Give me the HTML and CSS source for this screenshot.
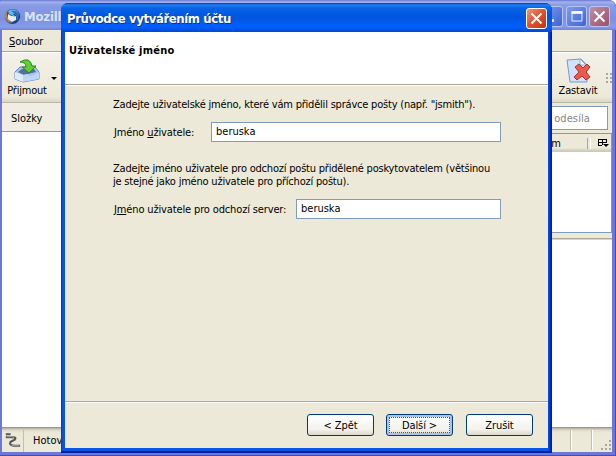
FILE: index.html
```html
<!DOCTYPE html>
<html lang="cs">
<head>
<meta charset="utf-8">
<title>Průvodce vytvářením účtu</title>
<link rel="stylesheet" href="styles.css">
</head>
<body>
<main class="desktop">
  <section class="app">
    <header class="app-title">
      <svg class="app-icon" viewBox="0 0 17 17"><circle cx="8.5" cy="8.5" r="7.6" fill="#174686"/><path d="M1 4L4 2 3 6 4 10 8 15 4 14 1 10Z" fill="#c67c3d"/><path d="M4 6Q8 9 12 8L12 12 8 14 4 11Z" fill="#e9edf0"/><path d="M4 3Q9-1 14 4L15 8Q12 5 9 6L12 9 5 6Z" fill="#68b9e8"/><path d="M7 3Q13 2 15 7L14 12 12 12Q14 7 7 3Z" fill="#2a70b5"/></svg>
      <span class="app-name">Mozilla</span>
      <div class="caption-buttons">
        <span class="caption caption-min"><svg viewBox="0 0 21 21"><path d="M5 15h7" stroke="#fff" stroke-width="3"/></svg></span>
        <span class="caption"><svg viewBox="0 0 21 21"><path d="M5.5 5v10.5h11V5" fill="none" stroke="#fff"/><path d="M5 6h12" stroke="#fff" stroke-width="3"/></svg></span>
        <span class="caption caption-close"><svg viewBox="0 0 21 21"><path d="M5 5l11 11M16 5l-11 11" stroke="#fff" stroke-width="2.2"/></svg></span>
      </div>
    </header>
    <nav class="menu"><span><u>S</u>oubor</span><span>Ú</span></nav>
    <div class="toolbar">
      <div class="tool">
        <svg class="tool-icon" viewBox="0 0 26 26"><path d="M1 14l5-5h15l4 5v7L9 24 1 21Z" fill="#a9c5ee" stroke="#6687bd"/><path d="M4 14l4-3h12l2 3-12 3Z" fill="#526f9c"/><path d="M1 14l8 3v7l-8-3Z" fill="#dcebff"/><path d="M9 17l4-1 3 2 4-1 5-3v7L9 24Z" fill="#bfd5f6"/><path d="M6 4Q16-2 18 8h4l-7 7-7-6h4Q12 4 6 4Z" fill="#62cd32" stroke="#278b20"/></svg>
        <span>Přijmout</span>
      </div>
      <i class="arrow"></i>
      <div class="tool tool-stop">
        <svg class="tool-icon" viewBox="0 0 26 26"><path d="M2 2l14-1 5 5 1 18H5Z" fill="#cfe2fb" stroke="#7399d3"/><path d="M15 1v6h6Z" fill="#fff" stroke="#8eaedb"/><path d="M10 9l4-3 4 4 4-4 3 3-4 5 4 5-4 3-4-4-5 4-3-3 5-5Z" fill="#ea5b4e" stroke="#b52d2a"/></svg>
        <span>Zastavit</span>
      </div>
      <i class="grip"></i>
    </div>
    <div class="workspace">
      <aside class="folders"><div class="folder-head">Složky</div><div class="tree"></div></aside>
      <div class="mail">
        <div class="search-row"><div class="search">o odesíla</div></div>
        <div class="messages">
          <div class="columns"><span class="column-name">m</span><svg class="picker" viewBox="0 0 12 10"><path d="M1.5 1v7M1 1.5h9M5.5 1v6M9.5 1v4M1 4.5h9M1 7.5h4" fill="none" stroke="#000"/><path d="M6 6h6L9 9Z"/></svg></div>
        </div>
        <div class="splitter"></div>
        <div class="preview"></div>
      </div>
    </div>
    <footer class="status">
      <svg class="online" viewBox="0 0 22 24"><path d="M4 6h5M4 9h6q6 0 3 3l-4 2q-2 3 3 4h7" fill="none" stroke="#555" stroke-width="2.2"/><path d="M5 8.5h5q4 0 1 3M10 17.5h8" fill="none" stroke="#aaa"/></svg>
      <span class="status-text">Hotovo</span><i class="panel"></i><i class="panel"></i><i class="panel"></i>
      <svg class="resize" viewBox="0 0 12 12"><path d="M9 1h2v2H9zM5 5h2v2H5zM9 5h2v2H9zM1 9h2v2H1zM5 9h2v2H5zM9 9h2v2H9z" fill="#aaa797"/></svg>
    </footer>
  </section>

  <section class="dialog" role="dialog">
    <header class="dialog-title"><h1>Průvodce vytvářením účtu</h1><button class="dialog-close" aria-label="Zavřít"><svg viewBox="0 0 21 21"><path d="M5 5l11 11M16 5l-11 11" stroke="#fff" stroke-width="2.2"/></svg></button></header>
    <div class="dialog-body">
      <div class="page-head"><h2>Uživatelské jméno</h2></div>
      <form class="page">
        <p class="intro">Zadejte uživatelské jméno, které vám přidělil správce pošty (např. "jsmith").</p>
        <div class="field"><label for="user">Jméno <u>u</u>živatele:</label><input id="user" value="beruska"></div>
        <p class="outgoing">Zadejte jméno uživatele pro odchozí poštu přidělené poskytovatelem (většinou<br>je stejné jako jméno uživatele pro příchozí poštu).</p>
        <div class="field field-out"><label for="smtp">J<u>m</u>éno uživatele pro odchozí server:</label><input id="smtp" value="beruska"></div>
      </form>
      <footer class="actions"><button>&lt; Zpět</button><button class="primary">Další &gt;</button><button class="cancel">Zrušit</button></footer>
    </div>
  </section>
</main>
</body>
</html>
```
FILE: styles.css
```css
* { box-sizing: border-box; }
body, h1, h2, p { margin: 0; }
body, input, button { font: 11px/13px "DejaVu Sans Condensed", "DejaVu Sans", sans-serif; color: #000; }
body { overflow: hidden; background: #fff; }
svg { display: block; }
u { text-underline-offset: 1px; text-decoration-thickness: 1px; text-decoration-skip-ink: none; }
.desktop { position: relative; width: 616px; height: 456px; }
.app { display: flex; flex-direction: column; width: 616px; height: 456px; padding: 0 4px 4px 2px; background: #6c78d8; border-radius: 0 7px 0 0; box-shadow: inset -1px -1px #4c4ca8; }
.app-title { display: flex; align-items: center; flex: 0 0 30px; margin: 0 -4px 0 -2px; padding: 3px 6px 0 4px; border-radius: 3px 8px 0 0; background: linear-gradient(#6876ce 0, #a1b2ee 2px, #899be5 5px, #7b91e0 18px, #859ce8 27px, #7182d6 30px); }
.app-icon { width: 17px; height: 17px; }
.app-name { margin-left: 3px; color: #d9e2f9; font-size: 13px; font-weight: bold; letter-spacing: -.2px; }
.caption-buttons { display: flex; gap: 2px; margin-left: auto; }
.caption { width: 21px; height: 21px; border: 1px solid #b8c5f4; border-radius: 3px; background: linear-gradient(135deg, #7f9aea, #3c64d5); }
.caption-min { margin-right: 1px; }
.caption svg, .dialog-close svg { width: 19px; height: 19px; }
.caption-close { background: linear-gradient(135deg, #bf8fa7, #9f4e68); }
.menu { display: flex; gap: 17px; flex: 0 0 22px; padding: 5px 7px 3px; background: #ece9d8; border-bottom: 1px solid #aaa797; letter-spacing: -.15px; }
.toolbar { display: flex; flex: 0 0 51px; padding-left: 4px; border-bottom: 1px solid #bab7a6; border-top: 1px solid #fff; background: linear-gradient(#f3f1e8, #ece9d8 44px, #dad6c6); letter-spacing: -.2px; }
.tool { display: flex; flex-direction: column; align-items: center; width: 42px; padding-top: 5px; white-space: nowrap; }
.tool-icon { width: 26px; height: 26px; }
.arrow { width: 0; height: 0; margin: 24px 0 0 3px; border: 3px solid transparent; border-top-color: #000; }
.tool-stop { margin-left: auto; margin-right: 6px; }
.grip { width: 7px; height: 12px; margin-top: 19px; background: radial-gradient(#aaa797 1px, transparent 1px) 0 0 / 4px 4px; }
.workspace { display: flex; flex: 1; min-height: 0; }
.folders { display: flex; flex-direction: column; width: 80px; }
.folder-head { flex: 0 0 29px; padding: 9px 9px 5px; background: #f0eee3; border-bottom: 1px solid #7f9db9; }
.tree { flex: 1; background: #fff; }
.mail { display: flex; flex-direction: column; flex: 1; background: #ece9d8; }
.search-row { display: flex; justify-content: flex-end; flex: 0 0 30px; padding: 3px 4px 3px 0; }
.search { width: 150px; height: 24px; padding: 5px 17px 0 0; text-align: right; color: #858585; background: #fff; border: 1px solid #7f9db9; letter-spacing: .1px; }
.messages { flex: 0 0 100px; background: #fff; border: 1px solid #7f9db9; }
.columns { display: flex; align-items: center; justify-content: flex-end; position: relative; height: 18px; background: linear-gradient(#ece9d8 14px, #d6d2c2 16px, #cbc7b8); }
.columns::after { content: ""; position: absolute; right: 20px; width: 2px; height: 11px; border-left: 1px solid #aca899; border-right: 1px solid #fff; }
.column-name { margin-right: 36px; }
.picker { width: 12px; height: 10px; margin-right: 2px; }
.splitter { flex: 0 0 6px; border-bottom: 1px solid #aca899; }
.preview { flex: 1; background: #fff; border-top: 1px solid #d8d4c5; }
.status { display: flex; align-items: center; flex: 0 0 24px; background: linear-gradient(#bcb9a8 1px, #dfdccc 2px, #ece9d8 5px); border-top: 1px solid #7f9db9; }
.online { width: 22px; height: 24px; border-right: 1px solid #c2bfae; }
.status-text { margin-left: 9px; margin-right: auto; }
.panel { width: 21px; height: 20px; border-left: 1px solid #c2bfae; box-shadow: inset 1px 0 #fff; }
.resize { width: 12px; height: 12px; margin: 10px 0 0 -12px; }
.dialog { position: absolute; left: 61px; top: 3px; width: 491px; height: 450px; padding: 0 4px 3px; background: linear-gradient(90deg, #0831d9, #0855e5 2px, #0855e5 calc(100% - 4px), #0031d0 calc(100% - 2px), #001590); border-bottom: 2px solid #001ea0; border-radius: 7px 7px 0 0; }
.dialog-title { display: flex; align-items: center; height: 29px; margin: 0 -4px; padding: 2px 5px 0 6px; color: #fff; border-radius: 7px 7px 0 0; background: linear-gradient(#0835b5 0, #2181f0 2px, #0863e5 5px, #0055df 14px, #0060ff 24px, #0048cd 29px); }
.dialog-title h1 { padding-top: 1px; font: bold 13px/18px "DejaVu Sans Condensed", sans-serif; letter-spacing: -.4px; text-shadow: 1px 1px #123284; white-space: nowrap; }
.dialog-close { width: 21px; height: 21px; padding: 0; margin-left: auto; border: 1px solid #fff; border-radius: 3px; background: linear-gradient(135deg, #ed967a, #df512f 50%, #bd3410); }
.dialog-body { height: 416px; display: flex; flex-direction: column; background: #ece9d8; }
.page-head { height: 53px; padding: 12px 4px; background: #fff; border-bottom: 1px solid #aca899; }
h2 { font: bold 11px/13px "DejaVu Sans Condensed", sans-serif; letter-spacing: .22px; white-space: nowrap; }
.page { flex: 1; padding: 12px 47px 0 48px; border-top: 1px solid #fff; }
p { letter-spacing: -.205px; white-space: nowrap; }
.field { display: flex; align-items: center; height: 20px; margin-top: 11px; }
.field label { width: 98px; padding-left: 1px; letter-spacing: -.14px; white-space: nowrap; }
.field input { flex: 1; min-width: 0; height: 20px; padding: 0 4px 1px; border: 1px solid #7f9db9; background: #fff; }
.outgoing { margin-top: 20px; }
.field-out label { width: 183px; }
.actions { display: flex; flex: 0 0 47px; padding: 12px 15px 0 0; justify-content: flex-end; border-top: 1px solid #aca899; box-shadow: inset 0 1px #fff; }
.actions button { width: 67px; height: 22px; padding: 0; margin-left: 12px; border: 1px solid #003c74; border-radius: 3px; background: linear-gradient(#fff, #f3f2ec 70%, #ddd9cc); letter-spacing: -.1px; }
.actions .primary { outline: 1px dotted #555; outline-offset: -4px; box-shadow: inset 0 0 0 2px #a8c3f2; }
.actions .cancel { margin-left: 13px; }
```
